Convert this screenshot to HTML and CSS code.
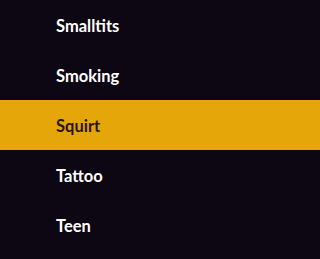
FILE: index.html
```html
<!DOCTYPE html>
<html>
<head>
<meta charset="utf-8">
<link rel="stylesheet" href="styles.css">
</head>
<body>
<ul class="list">
  <li class="item">Smalltits</li>
  <li class="item">Smoking</li>
  <li class="item active">Squirt</li>
  <li class="item">Tattoo</li>
  <li class="item">Teen</li>
</ul>
</body>
</html>
```
FILE: styles.css
```css
html, body {
  margin: 0;
  padding: 0;
  background: #0d0713;
}
.list {
  list-style: none;
  margin: 0;
  padding: 0;
  width: 100%;
}
.item {
  height: 50px;
  display: flex;
  align-items: center;
  padding-left: 56px;
  padding-top: 1px;
  box-sizing: border-box;
  font-family: Lato, "Noto Sans", sans-serif;
  font-weight: 700;
  font-size: 16.5px;
  color: #ffffff;
}
.item.active {
  background: #e5a60a;
  color: #2a1608;
}
```
